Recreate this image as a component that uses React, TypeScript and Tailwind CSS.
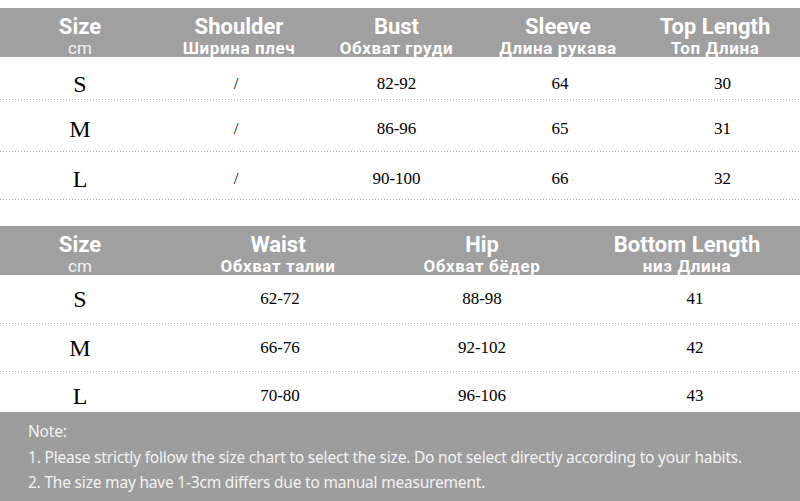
import React from "react";

const dots = "h-px bg-[repeating-linear-gradient(to_right,#b4b4b4_0_1px,transparent_1px_3px)]";

type Col = { title: string; sub: string; subNormal?: boolean; hClass?: string };

function Header({ cols, grid }: { cols: Col[]; grid: string }) {
  return (
    <div className={`grid ${grid} h-[49px] bg-[#a0a0a0] text-white font-['Roboto',sans-serif]`}>
      {cols.map((c, i) => (
        <div key={i} className={`flex flex-col items-center justify-center pt-[6px] ${c.hClass ?? ""}`}>
          <div className="text-[22px] font-bold leading-[24px]">{c.title}</div>
          <div className={`text-[17px] leading-[18px] ${c.subNormal ? "font-normal text-[#f4f4f4]" : "font-bold tracking-[0.6px]"}`}>{c.sub}</div>
        </div>
      ))}
    </div>
  );
}

function Row({ cells, grid, h, dotted, pt, cls }: { cells: string[]; grid: string; h: string; dotted: boolean; pt: string; cls?: string[] }) {
  return (
    <div className="flex flex-col">
      <div className={`grid ${grid} ${h} ${pt} items-center font-['Liberation_Serif',serif] text-black`}>
        {cells.map((c, i) => (
          <div key={i} className={`text-center ${i === 0 ? "text-[24px]" : "text-[17px]"} ${cls?.[i] ?? ""}`}>{c}</div>
        ))}
      </div>
      {dotted && <div className={dots} />}
    </div>
  );
}

export default function App() {
  const g1 = "grid-cols-[160px_158px_157px_170px_155px]";
  const g2 = "grid-cols-[160px_236px_172px_232px]";
  const c1 = ["", "pr-[6px] text-[15px]", "", "", ""];
  const c2 = ["", "pl-[4px]", "", "pl-[22px]"];
  return (
    <div className="w-[800px] h-[501px] bg-white overflow-hidden flex flex-col">
      <div className="h-[8px]" />
      <Header
        grid={g1}
        cols={[
          { title: "Size", sub: "cm", subNormal: true },
          { title: "Shoulder", sub: "Ширина плеч" },
          { title: "Bust", sub: "Обхват груди" },
          { title: "Sleeve", sub: "Длина рукава", hClass: "pr-[4px]" },
          { title: "Top Length", sub: "Топ Длина", hClass: "pr-[15px]" },
        ]}
      />
      <Row grid={g1} h="h-[42px]" pt="pt-[9px]" dotted cells={["S", "/", "82-92", "64", "30"]} cls={c1} />
      <Row grid={g1} h="h-[51px]" pt="pt-[6px]" dotted cells={["M", "/", "86-96", "65", "31"]} cls={c1} />
      <Row grid={g1} h="h-[47px]" pt="pt-[6px]" dotted cells={["L", "/", "90-100", "66", "32"]} cls={c1} />
      <div className="h-[26px]" />
      <Header
        grid={g2}
        cols={[
          { title: "Size", sub: "cm", subNormal: true },
          { title: "Waist", sub: "Обхват талии" },
          { title: "Hip", sub: "Обхват бёдер" },
          { title: "Bottom Length", sub: "низ Длина", hClass: "pl-[6px]" },
        ]}
      />
      <Row grid={g2} h="h-[48px]" pt="pt-0" dotted cells={["S", "62-72", "88-98", "41"]} cls={c2} />
      <Row grid={g2} h="h-[47px]" pt="pt-0" dotted cells={["M", "66-76", "92-102", "42"]} cls={c2} />
      <Row grid={g2} h="h-[40px]" pt="pt-[6px]" dotted={false} cells={["L", "70-80", "96-106", "43"]} cls={c2} />
      <div className="flex-1 bg-[#9d9d9d] pl-[28px] pt-[7px] text-[#f3f3f3] text-[15.5px] leading-[25.5px] font-['Noto_Sans',sans-serif] tracking-[-0.2px]">
        <div>Note:</div>
        <div>1. Please strictly follow the size chart to select the size. Do not select directly according to your habits.</div>
        <div>2. The size may have 1-3cm differs due to manual measurement.</div>
      </div>
    </div>
  );
}
